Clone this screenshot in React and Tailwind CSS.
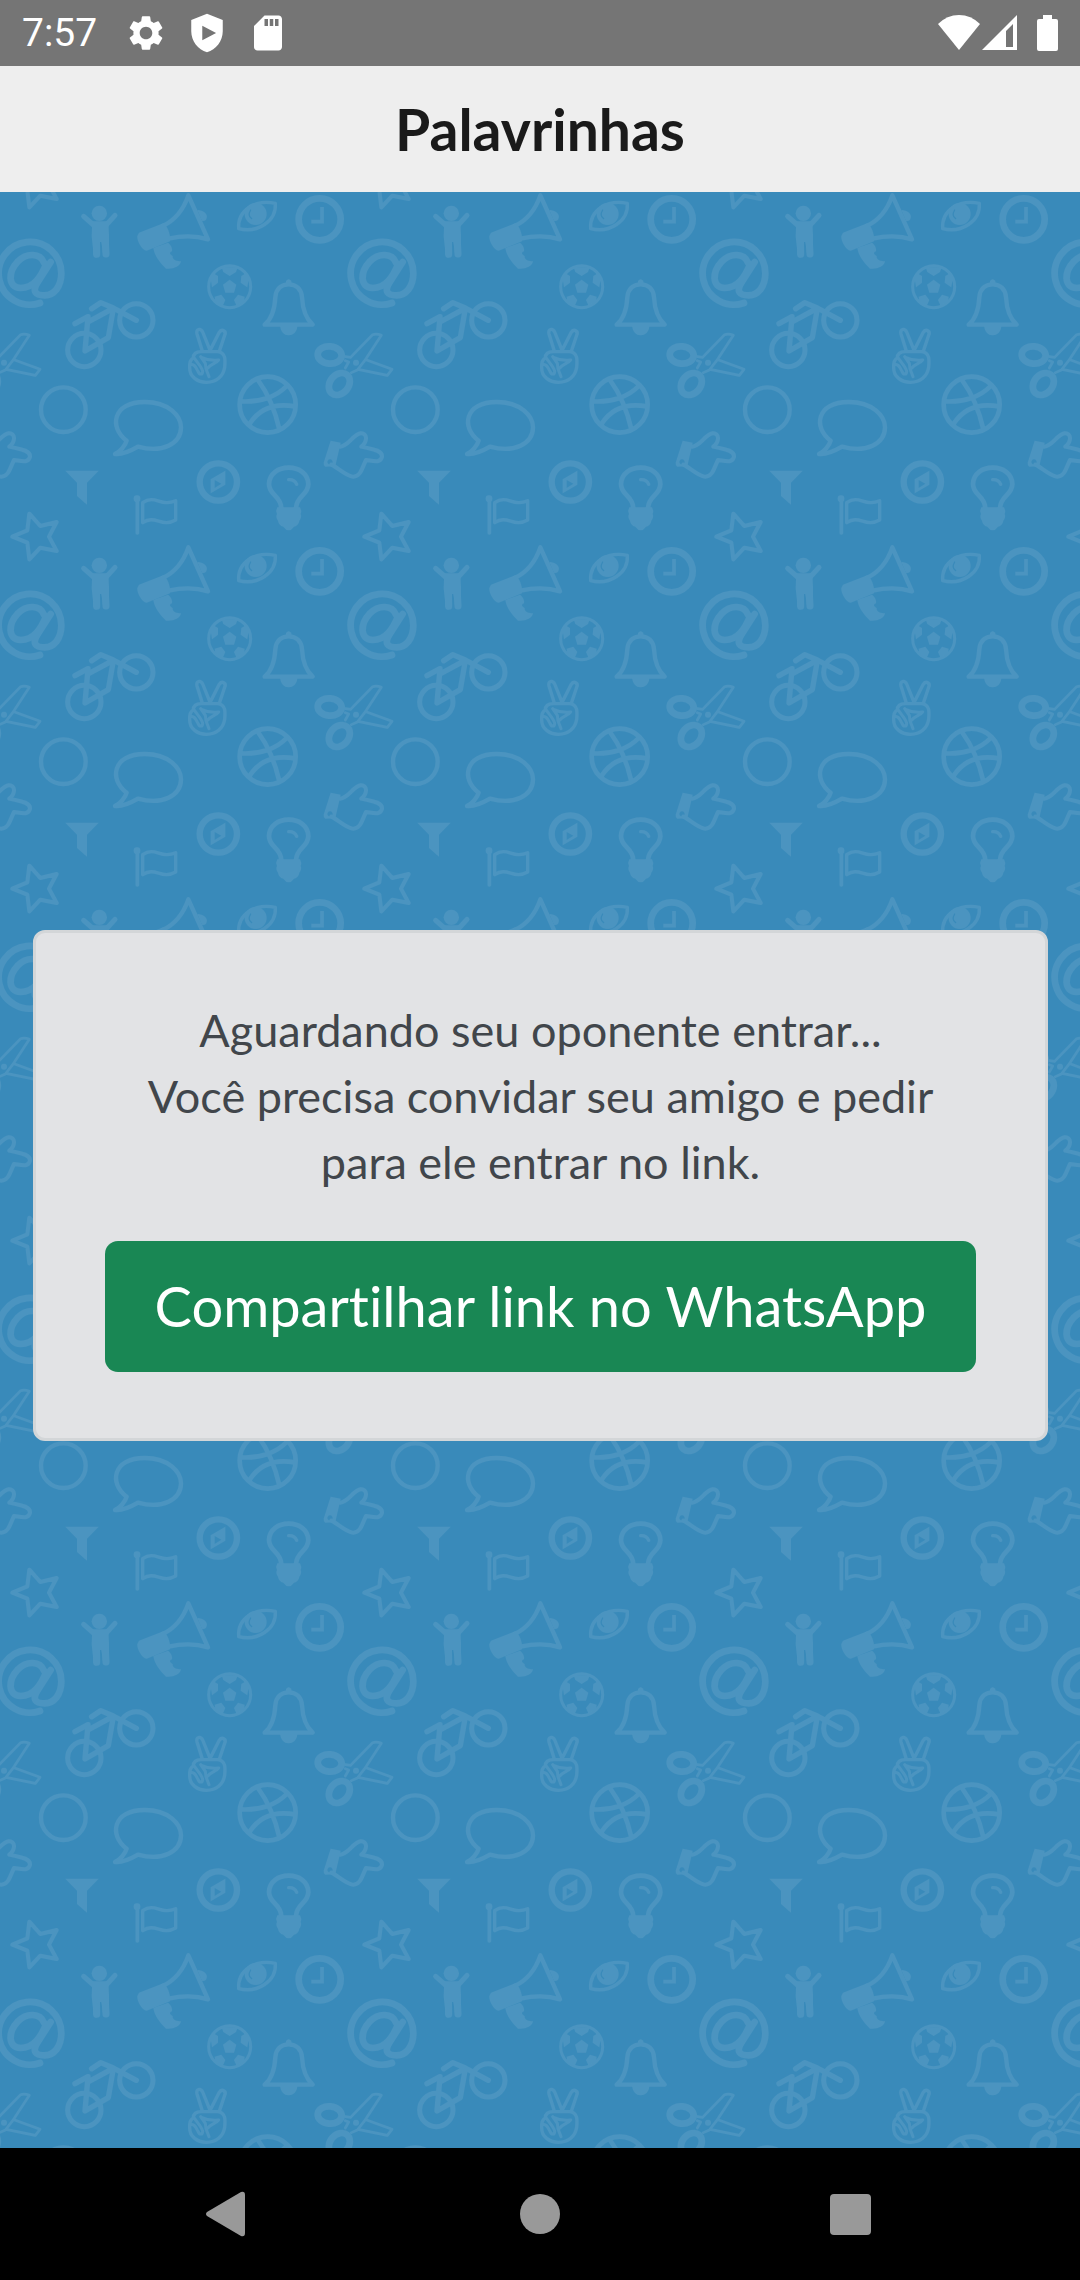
const INK = "#4b94c0";

function Doodles() {
  return (
    <g id="doodles" fill="none" stroke={INK} strokeWidth="13" strokeLinecap="round" strokeLinejoin="round">
      {/* star */}
      <path d="M88 983L121 1020L170 1008L147 1052L170 1095L121 1085L88 1120L82 1070L37 1052L82 1033Z" strokeWidth="12" />
      {/* child */}
      <g>
        <circle cx="298" cy="82" r="23" fill={INK} stroke="none" />
        <path d="M251 91L284 120M345 88L316 120" strokeWidth="15" />
        <path d="M277 106H325L327 150L326 206H310L304 168H298L298 206H281L275 150Z" fill={INK} stroke="none" />
        <path d="M289 150L290 205M315 150L318 204" strokeWidth="21" />
      </g>
      {/* megaphone */}
      <path d="M417 140L490 112C502 122 512 142 510 166L440 194C426 194 410 164 412 150Z" fill={INK} stroke="none" />
      <path d="M460 186L504 170C512 176 518 186 516 196C506 200 510 206 518 210C516 222 532 226 543 226C540 242 520 250 498 248C482 232 464 212 460 186Z" fill={INK} stroke="none" />
      <path d="M488 120C522 104 550 72 565 28L624 160C586 148 548 148 506 158" />
      <path d="M592 72C610 72 624 84 620 96C618 106 610 106 606 104Z" fill={INK} stroke="none" />
      {/* eye */}
      <path d="M716 128C712 72 766 40 826 52C830 106 772 142 716 128Z" strokeWidth="10" />
      <circle cx="767" cy="84" r="33" fill={INK} stroke="none" />
      <path d="M752 72C746 82 746 92 755 98" stroke="#398aba" strokeWidth="4" />
      {/* clock */}
      <circle cx="959" cy="100" r="63" strokeWidth="20" />
      <path d="M966 63V107H934" strokeWidth="11" strokeLinecap="butt" strokeLinejoin="miter" />
      {/* at sign */}
      <path d="M120 351A94 94 0 1 1 184 262C184 302 162 328 134 328C106 328 96 316 112 290L152 228" strokeWidth="20" />
      <path d="M132 230C120 200 80 200 54 226C24 258 22 304 62 306C102 306 122 272 136 240" strokeWidth="20" />
      {/* football */}
      <circle cx="689" cy="302" r="63" strokeWidth="9" />
      <path d="M689 281L709 296L702 320H676L669 296ZM665 244H713L708 258L689 270L670 258ZM632 278L640 262L654 270L654 290L636 304ZM746 278L738 262L724 270L722 290L742 304ZM644 332L664 326L676 342L668 360L646 346ZM734 332L714 326L702 342L710 360L732 346Z" fill={INK} stroke="none" />
      {/* bell */}
      <path d="M794 416C816 398 824 370 826 334C828 308 844 295 866 295C888 295 904 308 906 334C908 370 918 398 938 416Z" strokeWidth="13" />
      <path d="M858 296V285Q866 274 874 285V296ZM840 418H892C892 438 880 448 866 448C852 448 842 438 840 418Z" fill={INK} stroke="none" />
      {/* bicycle */}
      <circle cx="409" cy="403" r="50" strokeWidth="15" />
      <circle cx="253" cy="492" r="50" strokeWidth="15" />
      <path d="M409 403L340 366L302 350L275 368M340 368L325 455L255 495L264 392L225 413M264 408L334 370" strokeWidth="16" />
      {/* victory hand */}
      <path d="M606 492L591 444C587 428 602 426 608 438L629 490M632 490L657 440C666 426 680 436 674 448L658 496" strokeWidth="10" />
      <path d="M580 516C580 502 590 497 604 497H654C678 500 676 524 674 544C670 572 648 589 620 589C592 589 569 572 569 546C568 530 572 520 580 516Z" strokeWidth="10" />
      <path d="M572 536C584 532 588 546 594 556C598 566 608 568 608 556C606 544 592 530 584 518M602 512L616 532L618 548L627 572M604 514C620 522 640 524 656 522C646 534 632 534 624 546" strokeWidth="9" />
      {/* scissors */}
      <ellipse cx="989" cy="507" rx="36" ry="26" strokeWidth="20" transform="rotate(5 989 507)" />
      <ellipse cx="1018" cy="594" rx="36" ry="28" strokeWidth="20" transform="rotate(-50 1018 594)" />
      <path d="M1036 512L1052 514L1118 446Q1130 442 1144 448L1094 524L1072 552L1054 560M1036 524L1046 528L1036 546M1100 522L1176 550L1162 568L1074 550" strokeWidth="8" />
      <circle cx="1068" cy="530" r="9" fill={INK} stroke="none" />
      {/* ring */}
      <circle cx="190" cy="671" r="67" />
      {/* speech bubble */}
      <path d="M345 804C362 796 376 778 380 764C326 724 338 648 434 648C506 648 543 690 543 724C543 774 486 802 414 782C390 796 368 806 345 804Z" />
      {/* basketball */}
      <circle cx="803" cy="656" r="84" strokeWidth="14" />
      <path d="M774 582C806 626 826 676 838 730M722 646C778 650 830 632 860 600M750 712C776 672 820 650 884 661" strokeWidth="14" />
      {/* pointing hand */}
      <path d="M1020 782C1048 778 1058 746 1082 742C1102 740 1104 766 1084 782C1106 788 1148 790 1146 812C1142 834 1116 824 1098 822C1086 846 1082 872 1060 872C1040 872 1016 846 994 836" strokeWidth="12" />
      <path fillRule="evenodd" d="M992 764L1022 770L1006 840L976 842Q970 838 971 830ZM990 820a8 8 0 1 0 .1 0Z" fill={INK} stroke="none" />
      {/* funnel */}
      <path d="M196 854H296L261 890V956L231 930V890Z" fill={INK} stroke="none" />
      {/* flag */}
      <circle cx="411" cy="938" r="10" fill={INK} stroke="none" />
      <path d="M412 940V1041" strokeWidth="11" />
      <path d="M428 950C466 924 482 964 527 944V1002C484 1026 466 984 428 1010Z" strokeWidth="10" />
      {/* compass */}
      <circle cx="655" cy="888" r="56" strokeWidth="19" />
      <path fillRule="evenodd" d="M676 854V896L632 922V880ZM644 882V906L664 893Z" fill={INK} stroke="none" />
      {/* light bulb */}
      <path d="M844 966C842 928 807 928 807 894C808 862 836 845 866 845C896 845 924 862 925 894C925 928 890 928 888 966" strokeWidth="14" />
      <path d="M866 881Q884 880 890 895" strokeWidth="10" />
      <path d="M832 964H900Q906 974 902 984Q906 994 898 1004Q896 1018 882 1022Q866 1044 850 1022Q836 1018 834 1004Q826 994 831 984Q826 974 832 964Z" fill={INK} stroke="none" />
    </g>
  );
}

function Wallpaper() {
  return (
    <svg className="absolute inset-0 h-full w-full" aria-hidden="true">
      <defs>
        <Doodles />
        <pattern id="wall" width="352" height="352" patternUnits="userSpaceOnUse" viewBox="0 18 1056 1056">
          <use href="#doodles" />
          <use href="#doodles" x="-1056" />
          <use href="#doodles" x="1056" />
          <use href="#doodles" y="-1056" />
          <use href="#doodles" y="1056" />
        </pattern>
      </defs>
      <rect width="100%" height="100%" fill="url(#wall)" />
    </svg>
  );
}

function StatusBar() {
  return (
    <div className="flex h-[66px] shrink-0 items-center justify-between bg-[#757575] px-[22px] text-white">
      <div className="flex items-center gap-[19px]">
        <span className="mr-[9px] font-[Roboto,sans-serif] text-[39px] leading-[66px]">7:57</span>
        <svg className="size-[42px]" viewBox="0 0 24 24" fill="currentColor" aria-hidden="true">
          <path d="M19.14 12.94c.04-.3.06-.61.06-.94 0-.32-.02-.64-.07-.94l2.03-1.58a.49.49 0 0 0 .12-.61l-1.92-3.32a.488.488 0 0 0-.59-.22l-2.39.96c-.5-.38-1.03-.7-1.62-.94l-.36-2.54a.484.484 0 0 0-.48-.41h-3.84c-.24 0-.43.17-.47.41l-.36 2.54c-.59.24-1.13.57-1.62.94l-2.39-.96c-.22-.08-.47 0-.59.22L2.74 8.87c-.12.21-.08.47.12.61l2.03 1.58c-.05.3-.09.63-.09.94s.02.64.07.94l-2.03 1.58a.49.49 0 0 0-.12.61l1.92 3.32c.12.22.37.29.59.22l2.39-.96c.5.38 1.03.7 1.62.94l.36 2.54c.05.24.24.41.48.41h3.84c.24 0 .44-.17.47-.41l.36-2.54c.59-.24 1.13-.56 1.62-.94l2.39.96c.22.08.47 0 .59-.22l1.92-3.32c.12-.22.07-.47-.12-.61l-2.01-1.58zM12 15.6c-1.98 0-3.6-1.62-3.6-3.6s1.62-3.6 3.6-3.6 3.6 1.62 3.6 3.6-1.62 3.6-3.6 3.6z" />
        </svg>
        <svg className="size-[42px]" viewBox="0 0 24 24" fill="currentColor" fillRule="evenodd" aria-hidden="true">
          <path d="M12 1L3 4.6V11C3 16.5 6.8 21.6 12 23C17.2 21.6 21 16.5 21 11V4.6ZM9.3 7.8L17.2 12L9.3 16.2Z" />
        </svg>
        <svg className="size-[42px]" viewBox="0 0 24 24" fill="currentColor" fillRule="evenodd" aria-hidden="true">
          <path d="M18 2h-8L4 8v12c0 1.1.9 2 2 2h12c1.1 0 2-.9 2-2V4c0-1.1-.9-2-2-2zM10 4H12V8H10ZM13 4H15V8H13ZM16 4H18V8H16Z" />
        </svg>
      </div>
      <div className="flex items-center">
        <svg className="h-[36px] w-[42px]" viewBox="0 0 42 36" fill="currentColor" aria-hidden="true">
          <path d="M21 35L0 9Q9 0 21 0T42 9Z" />
        </svg>
        <svg className="ml-[2px] h-[36px] w-[36px]" viewBox="0 0 36 36" fill="currentColor" fillRule="evenodd" aria-hidden="true">
          <path d="M0 35L35 0V35ZM24 16V32H31V9Z" />
        </svg>
        <svg className="ml-[19px] h-[36px] w-[21px]" viewBox="0 0 21 36" fill="currentColor" aria-hidden="true">
          <path d="M6 0H15V4H19Q21 4 21 6V34Q21 36 19 36H2Q0 36 0 34V6Q0 4 2 4H6Z" />
        </svg>
      </div>
    </div>
  );
}

function NavBar() {
  return (
    <nav className="flex h-[132px] shrink-0 items-center justify-around bg-black px-[74px] text-[#999999]">
      <button type="button" aria-label="Voltar" className="flex size-16 items-center justify-center">
        <svg className="h-[46px] w-[46px]" viewBox="0 0 46 46" fill="currentColor" aria-hidden="true">
          <path d="M1 21L35 1Q39 0 39 4V42Q39 46 35 45L1 25Q-1 23 1 21Z" />
        </svg>
      </button>
      <button type="button" aria-label="Início" className="flex size-16 items-center justify-center">
        <span className="size-10 rounded-full bg-[#999999]" />
      </button>
      <button type="button" aria-label="Recentes" className="flex size-16 items-center justify-center">
        <span className="size-[41px] rounded bg-[#999999]" />
      </button>
    </nav>
  );
}

export default function App() {
  return (
    <div className="flex min-h-screen flex-col font-[Lato,sans-serif] [font-variant-ligatures:none]">
      <StatusBar />
      <header className="flex h-[126px] shrink-0 items-center justify-center bg-[#eeeeee]">
        <h1 className="text-[57px] font-bold leading-[66px] text-[#1a1a1a]">Palavrinhas</h1>
      </header>
      <main className="relative flex grow items-center bg-[#398aba] pl-[33px] pr-8 pt-[30px]">
        <Wallpaper />
        <section className="relative flex w-full flex-col gap-[46px] rounded-xl border-[3px] border-[#d3d6d8] bg-[#e2e3e5] px-[69px] pb-[66px] pt-16">
          <p className="text-center text-[45px] leading-[66px] text-[#41464b]">
            Aguardando seu oponente entrar...
            <br />
            Você precisa convidar seu amigo e pedir para ele entrar no link.
          </p>
          <button type="button" className="h-[131px] whitespace-nowrap rounded-[13px] bg-[#198754] text-[56px] text-white">
            Compartilhar link no WhatsApp
          </button>
        </section>
      </main>
      <NavBar />
    </div>
  );
}
